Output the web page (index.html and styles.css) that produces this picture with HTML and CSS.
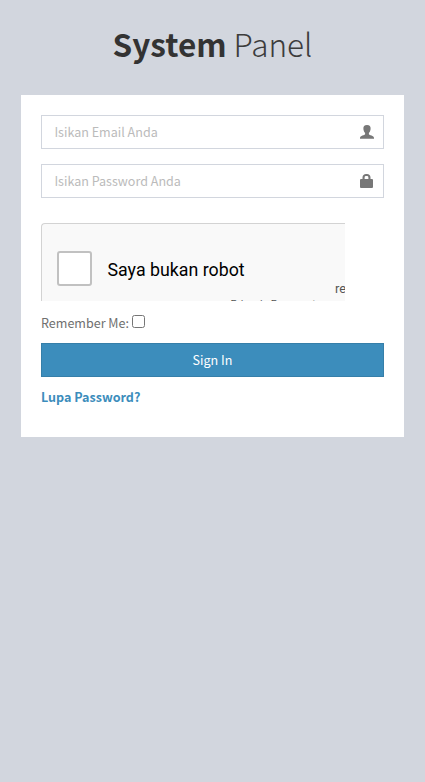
FILE: index.html
```html
<!DOCTYPE html>
<html lang="id">
<head>
<meta charset="utf-8">
<title>System Panel</title>
<link rel="stylesheet" href="styles.css">
</head>
<body>
<main class="login-box">
  <h1 class="login-logo"><b>System</b> <span class="light">Panel</span></h1>
  <form class="login-body">
    <label class="field">
      <input type="email" placeholder="Isikan Email Anda">
      <svg class="icon" viewBox="0 0 14 14"><path d="M7 0C4.3 0 3.2 1.6 3.4 4C3.6 6 4.3 7.2 5.1 8.1V9.3C4.8 10.3 0 10.4 0 13V13.8H14V13C14 10.4 9.2 10.3 8.9 9.3V8.1C9.7 7.2 10.4 6 10.6 4C10.8 1.6 9.7 0 7 0Z"/></svg>
    </label>
    <label class="field">
      <input type="password" placeholder="Isikan Password Anda">
      <svg class="icon" viewBox="0 0 14 14"><path fill-rule="evenodd" d="M2.5 5V3.5C2.5 1.2 4.1 0 6 0H7C9 0 10.5 1.2 10.5 3.5V5H12Q13 5 13 6V13Q13 14 12 14H1Q0 14 0 13V6Q0 5 1 5ZM4.6 5H8.4V3.4Q8.4 2 7 2H6Q4.6 2 4.6 3.4Z"/></svg>
    </label>
    <div class="captcha">
      <span class="captcha-check"></span>
      <span class="captcha-label">Saya bukan robot</span>
      <span class="captcha-brand">reCAPTCHA</span>
      <span class="captcha-terms">Privasi - Persyaratan</span>
    </div>
    <label class="remember"><span>Remember Me:</span><input type="checkbox"></label>
    <button class="submit" type="button">Sign In</button>
    <a class="forgot" href="#">Lupa Password?</a>
  </form>
</main>
</body>
</html>
```
FILE: styles.css
```css
* { box-sizing: border-box; }
body {
  margin: 0;
  min-height: 782px;
  background: #d2d6de;
  color: #707070;
  font: 12.55px/20px "Source Sans Pro", "Noto Sans CJK SC", sans-serif;
}
.login-box { width: 383px; margin: 0 auto; padding-top: 18px; }
.login-logo {
  margin: 0 0 27px;
  color: #333;
  font-size: 31.5px;
  line-height: 50px;
  font-weight: 300;
  text-align: center;
}
.login-logo b { font-weight: 700; }
.light { font-weight: 300; color: #3c3c3c; }
.login-body {
  height: 342px;
  padding: 20px;
  background: #fff;
}
.field { display: block; position: relative; height: 34px; margin-bottom: 15px; }
.field input {
  display: block;
  width: 100%;
  height: 34px;
  padding: 5px 42px 7px 12.4px;
  border: 1px solid #d2d6de;
  border-radius: 0;
  background: #fff;
  color: #555;
  font: inherit;
}
.field input::placeholder { color: #bbb; opacity: 1; }
.icon {
  position: absolute;
  top: 10px;
  right: 10px;
  width: 14px;
  height: 14px;
  fill: #777;
}
.captcha {
  position: relative;
  display: flex;
  align-items: center;
  width: 304px;
  height: 78px;
  margin: 25px 0 12px;
  padding: 12px 0 0 15px;
  overflow: hidden;
  border: 1px solid #d3d3d3;
  border-right: 0;
  border-bottom: 0;
  border-radius: 4px 0 0 0;
  background: #f9f9f9;
  color: #000;
  font-family: Roboto, sans-serif;
}
.captcha-check {
  width: 35px;
  height: 35px;
  margin-right: 15.5px;
  border: 2px solid #c1c1c1;
  border-radius: 3px;
  background: #fff;
}
.captcha-label { padding-top: 3px; font-size: 17.8px; line-height: 22px; }
.captcha-brand, .captcha-terms { position: absolute; color: #555; white-space: nowrap; }
.captcha-brand { left: 293px; top: 57px; font-size: 13px; line-height: 16px; }
.captcha-terms { left: 188.5px; top: 74px; font-size: 10.7px; line-height: 14px; }
.remember { display: flex; height: 20px; }
.remember input { width: 13px; height: 13px; margin: 2px 0 0 3px; }
.submit {
  display: block;
  width: 100%;
  height: 34px;
  margin: 10px 0;
  padding: 0;
  border: 1px solid #367fa9;
  background: #3c8dbc;
  color: #fff;
  font: inherit;
}
.forgot { display: block; color: #3c8dbc; font-weight: 700; text-decoration: none; }
```
